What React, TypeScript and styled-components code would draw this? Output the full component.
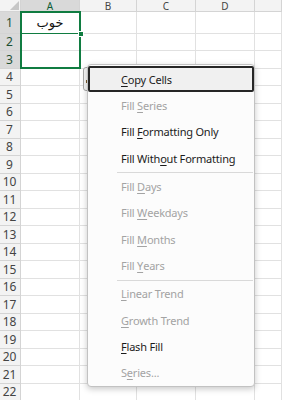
import styled, { createGlobalStyle } from "styled-components";

const GlobalStyle = createGlobalStyle`
  html, body {
    margin: 0;
    padding: 0;
    background: #ffffff;
    overflow: hidden;
  }
  body {
    width: 282px;
    height: 400px;
    font-family: "Noto Sans", "DejaVu Sans", sans-serif;
  }
`;

const columns = ["A", "B", "C", "D", ""];
const rowCount = 22;
const selectedRows = [1, 2, 3];

type MenuEntry =
  | { kind: "item"; before: string; key: string; after: string; disabled?: boolean; active?: boolean }
  | { kind: "sep" };

const menu: MenuEntry[] = [
  { kind: "item", before: "", key: "C", after: "opy Cells", active: true },
  { kind: "item", before: "Fill ", key: "S", after: "eries", disabled: true },
  { kind: "item", before: "Fill ", key: "F", after: "ormatting Only" },
  { kind: "item", before: "Fill With", key: "o", after: "ut Formatting" },
  { kind: "sep" },
  { kind: "item", before: "Fill ", key: "D", after: "ays", disabled: true },
  { kind: "item", before: "Fill ", key: "W", after: "eekdays", disabled: true },
  { kind: "item", before: "Fill ", key: "M", after: "onths", disabled: true },
  { kind: "item", before: "Fill ", key: "Y", after: "ears", disabled: true },
  { kind: "sep" },
  { kind: "item", before: "", key: "L", after: "inear Trend", disabled: true },
  { kind: "item", before: "", key: "G", after: "rowth Trend", disabled: true },
  { kind: "item", before: "", key: "F", after: "lash Fill" },
  { kind: "item", before: "S", key: "e", after: "ries...", disabled: true },
];

function App() {
  return (
    <>
      <GlobalStyle />
      <Sheet>
        <Grid>
          <Corner>
            <CornerTriangle />
          </Corner>
          {columns.map((c, i) => (
            <ColHeader key={"h" + i} selected={c === "A"}>
              {c}
            </ColHeader>
          ))}
          {Array.from({ length: rowCount }, (_, r) => {
            const row = r + 1;
            return [
              <RowHeader key={"r" + row} selected={selectedRows.includes(row)}>
                {row}
              </RowHeader>,
              ...columns.map((_, ci) => (
                <Cell key={row + "-" + ci}>
                  {row === 1 && ci === 0 ? <CellText>خوب</CellText> : null}
                </Cell>
              )),
            ];
          })}
        </Grid>

        <Selection>
          <ActiveLine />
        </Selection>
        <FillHandle />

        <OptionsButton>
          <OptionsGlyph />
        </OptionsButton>

        <Menu>
          {menu.map((m, i) =>
            m.kind === "sep" ? (
              <Separator key={i} />
            ) : (
              <Item key={i} disabled={m.disabled} active={m.active}>
                {m.before}
                <u>{m.key}</u>
                {m.after}
              </Item>
            )
          )}
        </Menu>
      </Sheet>
    </>
  );
}

export default App;

const Sheet = styled.div`
  position: relative;
  width: 282px;
  height: 400px;
  overflow: hidden;
`;

const Grid = styled.div`
  display: grid;
  grid-template-columns: 21px 59px 57px 59px 59px 1fr;
  grid-template-rows: 12px 21.7px repeat(${rowCount - 1}, 17.5px);
`;

const Corner = styled.div`
  position: relative;
  background: #f3f3f3;
  border-right: 1px solid #d4d4d4;
  border-bottom: 1px solid #d4d4d4;
`;

const CornerTriangle = styled.div`
  position: absolute;
  right: 1px;
  bottom: 1px;
  width: 0;
  height: 0;
  border-left: 9px solid transparent;
  border-bottom: 9px solid #c6c6c6;
`;

const ColHeader = styled.div<{ selected?: boolean }>`
  background: ${(p) => (p.selected ? "#d9d9d9" : "#f3f3f3")};
  color: ${(p) => (p.selected ? "#0e5c35" : "#444444")};
  border-right: 1px solid #d4d4d4;
  border-bottom: 1px solid ${(p) => (p.selected ? "#107c41" : "#d4d4d4")};
  font-size: 10px;
  line-height: 10px;
  display: flex;
  align-items: center;
  justify-content: center;
`;

const RowHeader = styled.div<{ selected?: boolean }>`
  background: ${(p) => (p.selected ? "#d9d9d9" : "#f3f3f3")};
  color: ${(p) => (p.selected ? "#1d4f34" : "#444444")};
  border-right: 1px solid ${(p) => (p.selected ? "#107c41" : "#d4d4d4")};
  border-bottom: 1px solid #d4d4d4;
  font-size: 12px;
  display: flex;
  align-items: center;
  justify-content: center;
  padding-right: 1px;
`;

const Cell = styled.div`
  border-right: 1px solid #e1e1e1;
  border-bottom: 1px solid #e1e1e1;
  display: flex;
  align-items: center;
  justify-content: center;
`;

const CellText = styled.span`
  font-family: "DejaVu Sans", sans-serif;
  font-size: 13px;
  color: #111111;
`;

const Selection = styled.div`
  position: absolute;
  left: 20px;
  top: 11px;
  width: 61px;
  height: 58px;
  border: 2px solid #107c41;
  box-sizing: border-box;
`;

const ActiveLine = styled.div`
  position: absolute;
  left: 0;
  right: 0;
  top: 20px;
  height: 1px;
  background: #107c41;
`;

const FillHandle = styled.div`
  position: absolute;
  left: 78px;
  top: 31px;
  width: 4px;
  height: 4px;
  background: #107c41;
  border: 1px solid #ffffff;
`;

const OptionsButton = styled.div`
  position: absolute;
  left: 83px;
  top: 67px;
  width: 18px;
  height: 22px;
  background: #f7f7f7;
  border: 1px solid #a8a8a8;
  border-radius: 3px;
`;

const OptionsGlyph = styled.div`
  position: absolute;
  left: 2px;
  top: 12px;
  width: 3px;
  height: 3px;
  background: #7a5a2a;
`;

const Menu = styled.div`
  position: absolute;
  left: 87px;
  top: 64px;
  width: 168px;
  height: 323px;
  box-sizing: border-box;
  padding: 1px 0;
  background: #fcfcfc;
  border: 1px solid #c2c2c2;
  border-radius: 4px;
  box-shadow: 0 2px 6px rgba(0, 0, 0, 0.22);
  display: flex;
  flex-direction: column;
`;

const Item = styled.div<{ disabled?: boolean; active?: boolean }>`
  height: 26.33px;
  flex: none;
  box-sizing: border-box;
  display: flex;
  align-items: center;
  padding-left: ${(p) => (p.active ? "31px" : "33px")};
  font-family: "Noto Sans", sans-serif;
  font-size: 11px;
  letter-spacing: -0.2px;
  white-space: pre;
  color: ${(p) => (p.disabled ? "#a3a3a3" : "#1b1b1b")};
  background: ${(p) => (p.active ? "#f0f0f0" : "transparent")};
  border: ${(p) => (p.active ? "2px solid #262626" : "none")};
  border-radius: ${(p) => (p.active ? "2px" : "0")};

  u {
    text-underline-offset: 2px;
  }
`;

const Separator = styled.div`
  flex: none;
  height: 2px;
  margin: 0 1px 0 29px;
  border-bottom: 1px solid #d9d9d9;
  box-sizing: border-box;
`;
